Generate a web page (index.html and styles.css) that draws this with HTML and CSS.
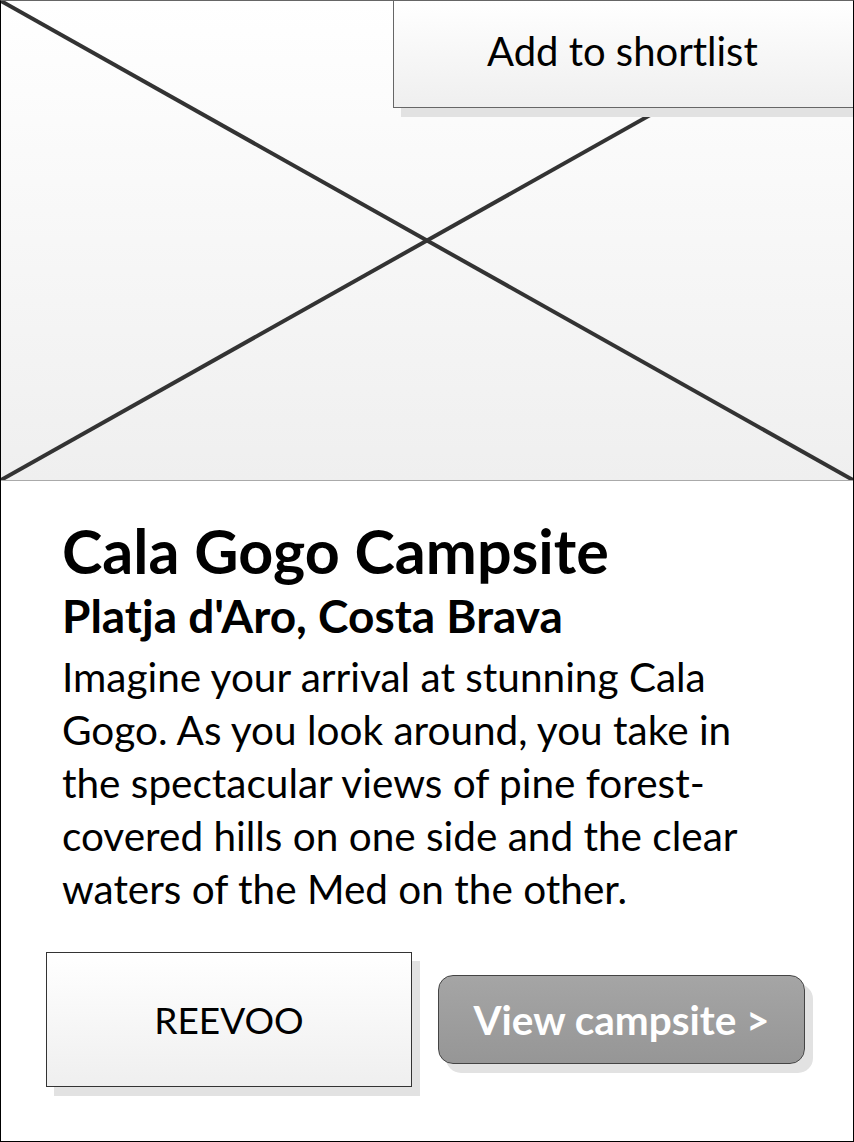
FILE: index.html
```html
<!DOCTYPE html>
<html>
<head>
<meta charset="utf-8">
<link rel="stylesheet" href="styles.css">
</head>
<body>
<div class="card">
  <div class="hero">
    <svg class="placeholder" viewBox="0 0 852 480" preserveAspectRatio="none">
      <line x1="0" y1="0" x2="852" y2="480" stroke="#333" stroke-width="4"/>
      <line x1="0" y1="480" x2="852" y2="0" stroke="#333" stroke-width="4"/>
    </svg>
    <button class="shortlist">Add to shortlist</button>
  </div>
  <div class="content">
    <h1 class="title">Cala Gogo Campsite</h1>
    <h2 class="subtitle">Platja d'Aro, Costa Brava</h2>
    <p class="desc">Imagine your arrival at stunning Cala Gogo. As you look around, you take in the spectacular views of pine forest-covered hills on one side and the clear waters of the Med on the other.</p>
    <div class="actions">
      <div class="reevoo">REEVOO</div>
      <button class="view">View campsite &gt;</button>
    </div>
  </div>
</div>
</body>
</html>
```

FILE: styles.css
```css
* { box-sizing: border-box; }
html, body { margin: 0; padding: 0; background: #fff; }
body { font-family: Lato, "Open Sans", sans-serif; color: #000; }

.card {
  width: 854px;
  height: 1142px;
  border: 1px solid #000;
  border-top-color: #666;
  overflow: hidden;
}

.hero {
  position: relative;
  height: 480px;
  background: linear-gradient(#fff, #efefef);
  border-bottom: 1px solid #aaa;
}

.placeholder {
  position: absolute;
  inset: 0;
  width: 100%;
  height: 100%;
}

.shortlist {
  position: absolute;
  top: -1px;
  left: 392px;
  width: 480px;
  height: 108px;
  padding: 0 0 6px 93px;
  text-align: left;
  font-family: inherit;
  font-size: 40px;
  color: #000;
  background: linear-gradient(#fff, #efefef);
  border: 1px solid #666;
  box-shadow: 8px 9px 0 #e2e2e2;
}

.content {
  padding: 35px 0 0 61px;
}

.title {
  margin: 0;
  font-size: 61px;
  font-weight: 700;
  line-height: 70px;
}

.subtitle {
  margin: 6px 0 0;
  font-size: 46px;
  font-weight: 700;
  line-height: 48px;
}

.desc {
  margin: 10px 0 0;
  width: 710px;
  font-size: 40.5px;
  line-height: 53px;
}

.actions {
  display: flex;
  align-items: center;
  gap: 26px;
  margin: 37px 0 0 -16px;
}

.reevoo {
  width: 366px;
  height: 135px;
  display: flex;
  align-items: center;
  justify-content: center;
  font-size: 37px;
  background: linear-gradient(#fff, #efefef);
  border: 1px solid #333;
  box-shadow: 8px 9px 0 #e2e2e2;
}

.view {
  width: 367px;
  height: 89px;
  padding: 0;
  font-family: inherit;
  font-size: 40.5px;
  font-weight: 700;
  color: #fff;
  background: linear-gradient(#a5a5a5, #969696);
  border: 1px solid #444;
  border-radius: 15px;
  box-shadow: 8px 9px 0 #e2e2e2;
}
```
